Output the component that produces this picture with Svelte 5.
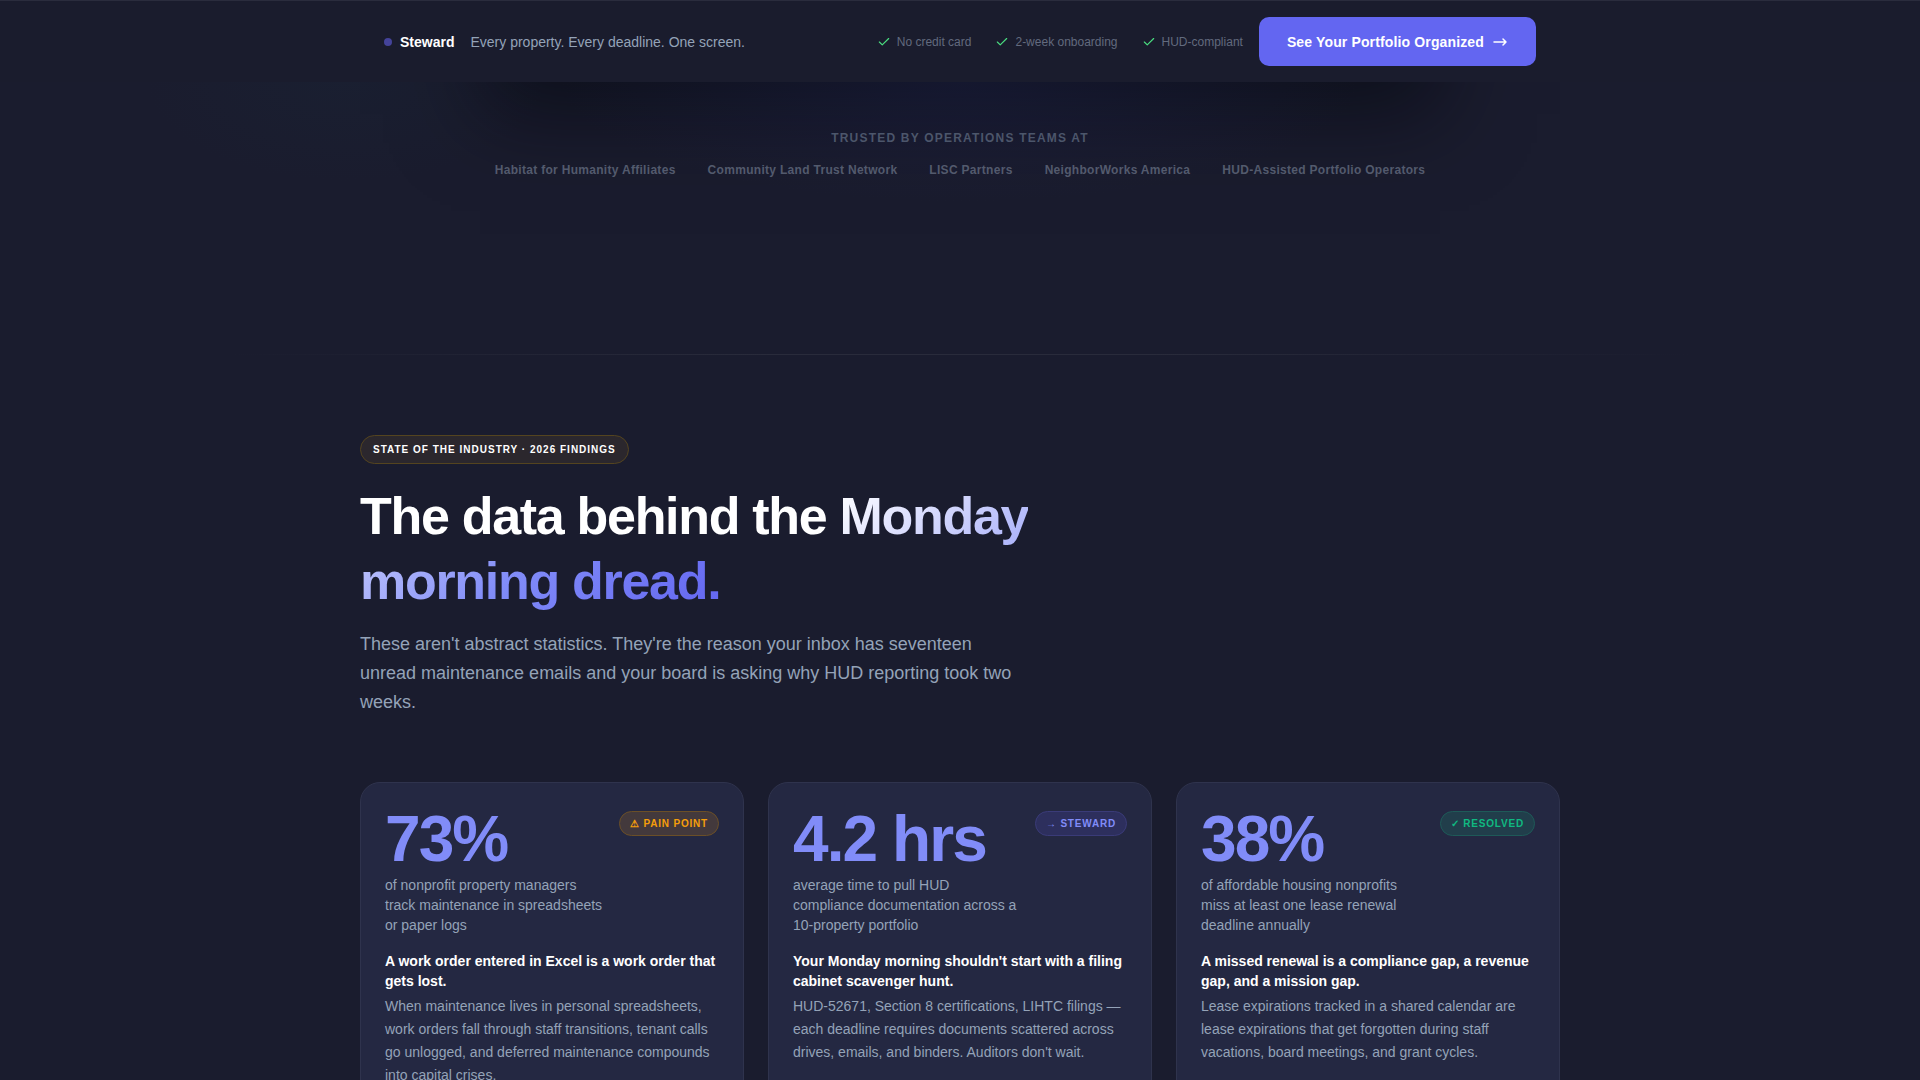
<script lang="ts">
  type Tone = 'pain' | 'steward' | 'resolved';

  type Stat = {
    value: string;
    label: string[];
    tone: Tone;
    icon: string;
    badge: string;
    title: string;
    body: string;
  };

  const perks = ['No credit card', '2-week onboarding', 'HUD-compliant'];

  const partners = [
    'Habitat for Humanity Affiliates',
    'Community Land Trust Network',
    'LISC Partners',
    'NeighborWorks America',
    'HUD-Assisted Portfolio Operators',
  ];

  const stats: Stat[] = [
    {
      value: '73%',
      label: ['of nonprofit property managers', 'track maintenance in spreadsheets', 'or paper logs'],
      tone: 'pain',
      icon: '⚠',
      badge: 'Pain point',
      title: 'A work order entered in Excel is a work order that gets lost.',
      body: 'When maintenance lives in personal spreadsheets, work orders fall through staff transitions, tenant calls go unlogged, and deferred maintenance compounds into capital crises.',
    },
    {
      value: '4.2 hrs',
      label: ['average time to pull HUD', 'compliance documentation across a', '10-property portfolio'],
      tone: 'steward',
      icon: '→',
      badge: 'Steward',
      title: "Your Monday morning shouldn't start with a filing cabinet scavenger hunt.",
      body: "HUD-52671, Section 8 certifications, LIHTC filings — each deadline requires documents scattered across drives, emails, and binders. Auditors don't wait.",
    },
    {
      value: '38%',
      label: ['of affordable housing nonprofits', 'miss at least one lease renewal', 'deadline annually'],
      tone: 'resolved',
      icon: '✓',
      badge: 'Resolved',
      title: 'A missed renewal is a compliance gap, a revenue gap, and a mission gap.',
      body: 'Lease expirations tracked in a shared calendar are lease expirations that get forgotten during staff vacations, board meetings, and grant cycles.',
    },
  ];
</script>

<header class="bar">
  <div class="bar-inner">
    <div class="brand">
      <span class="dot"></span>
      <strong>Steward</strong>
      <span class="tagline">Every property. Every deadline. One screen.</span>
    </div>
    <div class="actions">
      <ul class="perks">
        {#each perks as perk}
          <li>
            <svg viewBox="0 0 24 24" width="14" height="14" aria-hidden="true">
              <path d="M20 6 9 17l-5-5" />
            </svg>
            {perk}
          </li>
        {/each}
      </ul>
      <button class="cta" type="button">
        See Your Portfolio Organized
        <svg viewBox="0 0 16 16" width="16" height="16" aria-hidden="true">
          <path d="M2 8h12M11 5l3 3-3 3" />
        </svg>
      </button>
    </div>
  </div>
</header>

<main>
  <section class="trust">
    <p class="trust-title">Trusted by operations teams at</p>
    <ul class="partners">
      {#each partners as partner}
        <li>{partner}</li>
      {/each}
    </ul>
  </section>

  <section class="findings">
    <div class="container">
      <span class="eyebrow">State of the industry · 2026 findings</span>
      <h2>The data behind the <span class="accent">Monday morning dread.</span></h2>
      <p class="lead">
        These aren't abstract statistics. They're the reason your inbox has seventeen unread
        maintenance emails and your board is asking why HUD reporting took two weeks.
      </p>

      <div class="cards">
        {#each stats as stat (stat.value)}
          <article class="card">
            <div class="card-top">
              <div class="value">{stat.value}</div>
              <span class="badge {stat.tone}">{stat.icon} {stat.badge}</span>
            </div>
            <p class="label">
              {#each stat.label as line}
                <span>{line}</span>
              {/each}
            </p>
            <h3>{stat.title}</h3>
            <p class="body">{stat.body}</p>
          </article>
        {/each}
      </div>
    </div>
  </section>
</main>

<style>
  :global(body) {
    background: #1a1c2e;
    color: #fff;
    font-family: 'Liberation Sans', Arial, sans-serif;
    overflow-x: hidden;
  }

  p,
  h2,
  h3,
  ul {
    margin: 0;
    padding: 0;
  }

  ul {
    list-style: none;
  }

  .bar {
    position: sticky;
    top: 0;
    z-index: 10;
    background: #1a1c2d;
    border-top: 1px solid #2a2c3d;
  }

  .bar-inner {
    box-sizing: border-box;
    max-width: 1200px;
    margin: 0 auto;
    padding: 16px 24px;
    display: flex;
    align-items: center;
    justify-content: space-between;
    gap: 16px;
  }

  .brand,
  .actions,
  .perks,
  .perks li {
    display: flex;
    align-items: center;
  }

  .brand {
    gap: 8px;
    font-size: 14px;
  }

  .dot {
    width: 8px;
    height: 8px;
    border-radius: 50%;
    background: #44439a;
  }

  .tagline {
    margin-left: 8px;
    color: #94a3b8;
  }

  .actions {
    gap: 16px;
  }

  .perks {
    gap: 24px;
    color: #626a7e;
    font-size: 12px;
  }

  .perks li {
    gap: 6px;
  }

  svg {
    fill: none;
    stroke: currentColor;
    stroke-linecap: round;
    stroke-linejoin: round;
  }

  .perks svg {
    stroke: #4ade80;
    stroke-width: 2;
  }

  .cta {
    display: flex;
    align-items: center;
    gap: 8px;
    height: 49px;
    padding: 0 28px;
    border: 0;
    border-radius: 10px;
    background: #6366f1;
    color: #fff;
    font: bold 14px 'Liberation Sans', Arial, sans-serif;
    letter-spacing: 0.01em;
    cursor: pointer;
  }

  .cta svg {
    stroke-width: 1.5;
  }

  .trust {
    position: relative;
    overflow: hidden;
    padding: 48px 24px 176px;
    text-align: center;
  }

  .trust::before {
    content: '';
    position: absolute;
    left: 50%;
    top: -400px;
    width: 960px;
    height: 400px;
    margin-left: -480px;
    box-shadow: 0 32px 80px rgba(2, 4, 10, 0.5);
  }

  .trust::after {
    content: '';
    position: absolute;
    inset: 0;
    background:
      radial-gradient(400px 120px at 50% 0, rgba(32, 36, 84, 0.3), transparent),
      radial-gradient(200px 100px at 18% 0, rgba(24, 48, 64, 0.15), transparent);
  }

  .trust-title,
  .partners {
    position: relative;
    z-index: 1;
    font-size: 12px;
    font-weight: bold;
    line-height: 16px;
  }

  .trust-title {
    color: #4c566b;
    letter-spacing: 0.1em;
    text-transform: uppercase;
  }

  .partners {
    display: flex;
    flex-wrap: wrap;
    justify-content: center;
    gap: 8px 32px;
    margin-top: 16px;
    color: #535a6d;
    letter-spacing: 0.025em;
  }

  .findings {
    padding-bottom: 80px;
  }

  .findings::before {
    content: '';
    display: block;
    height: 1px;
    background: linear-gradient(90deg, transparent 12%, #292b3b 40%, #292b3b 60%, transparent 88%);
  }

  .container {
    max-width: 1200px;
    margin: 0 auto;
    padding-top: 80px;
  }

  .eyebrow {
    display: block;
    width: fit-content;
    padding: 6px 12px;
    border: 1px solid #54441f;
    border-radius: 16px;
    background: #2b272d;
    font-size: 10px;
    font-weight: bold;
    line-height: 15px;
    letter-spacing: 0.1em;
    text-transform: uppercase;
  }

  h2 {
    max-width: 720px;
    margin-top: 20px;
    font-size: 52px;
    line-height: 65px;
    letter-spacing: -0.025em;
  }

  .accent {
    background: linear-gradient(135deg, #fff 0%, #818cf8 60%, #6366f1 100%);
    background-clip: text;
    color: transparent;
  }

  .lead {
    max-width: 660px;
    margin-top: 16px;
    color: #94a3b8;
    font-size: 18px;
    line-height: 29px;
  }

  .cards {
    display: grid;
    grid-template-columns: repeat(3, 1fr);
    gap: 24px;
    margin-top: 65px;
  }

  .card {
    padding: 24px;
    border: 1px solid #2f334d;
    border-radius: 20px;
    background: #242842;
  }

  .card-top {
    display: flex;
    align-items: flex-start;
    justify-content: space-between;
  }

  .value {
    color: #818cf8;
    font-size: 64px;
    font-weight: bold;
    line-height: 64px;
    letter-spacing: -0.03em;
  }

  .badge {
    margin-top: 4px;
    padding: 5px 10px;
    border: 1px solid;
    border-radius: 16px;
    font-size: 10px;
    font-weight: bold;
    line-height: 13px;
    letter-spacing: 0.08em;
    text-transform: uppercase;
  }

  .pain {
    border-color: #6b4f27;
    background: #43393c;
    color: #f59e0b;
  }

  .steward {
    border-color: #3a3b78;
    background: #2d2f5d;
    color: #818cf8;
  }

  .resolved {
    border-color: #1e5a58;
    background: #213e4b;
    color: #10b981;
  }

  .label {
    margin-top: 4px;
    color: #94a3b8;
    font-size: 14px;
    line-height: 20px;
  }

  .label span {
    display: block;
  }

  h3 {
    margin-top: 16px;
    font-size: 14px;
    line-height: 20px;
  }

  .body {
    margin-top: 4px;
    color: #94a3b8;
    font-size: 14px;
    line-height: 23px;
  }
</style>
